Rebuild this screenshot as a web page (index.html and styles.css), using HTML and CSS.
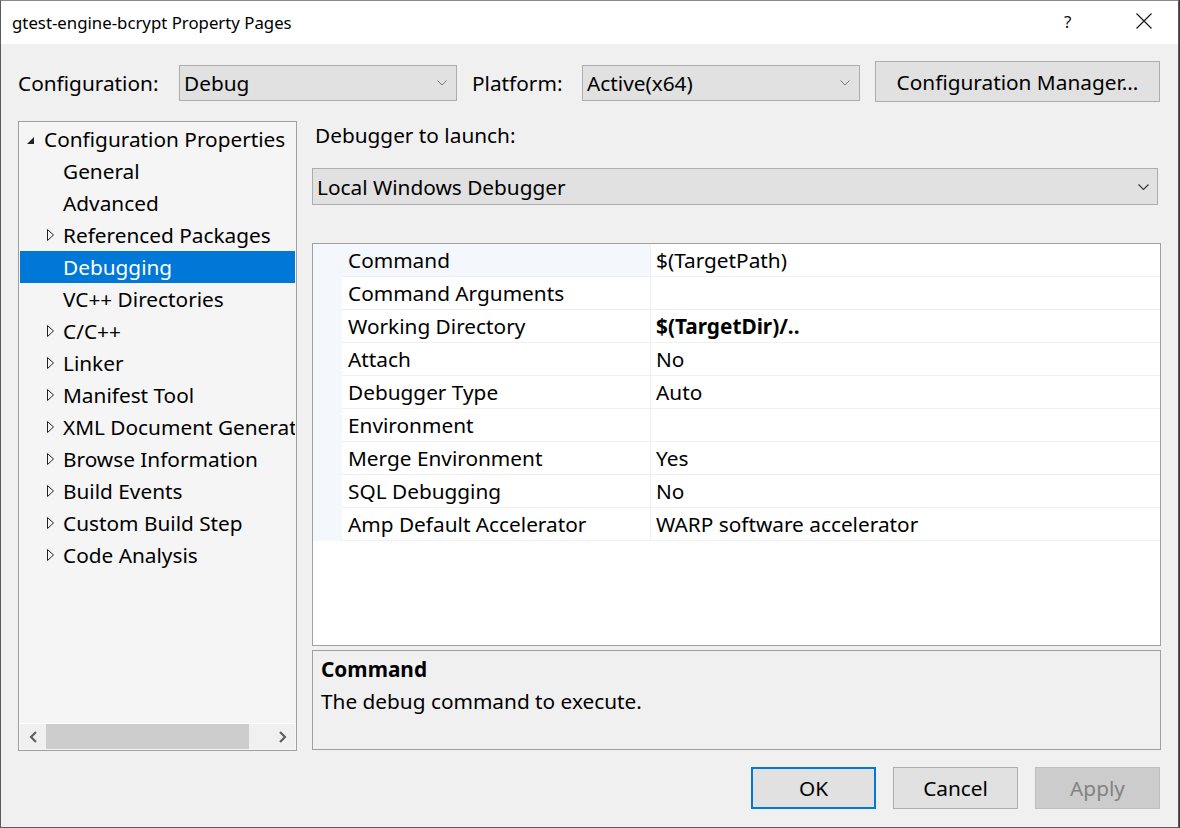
FILE: index.html
```html
<!DOCTYPE html>
<html>
<head>
<meta charset="utf-8">
<title>gtest-engine-bcrypt Property Pages</title>
<link rel="stylesheet" href="styles.css">
</head>
<body>
<div class="window">
  <div class="titlebar">
    <span class="title">gtest-engine-bcrypt Property Pages</span>
    <span class="tb-help">?</span>
    <span class="tb-close">
      <svg width="16" height="16" viewBox="0 0 16 16"><path d="M0.5 0.5 L15.5 15.5 M15.5 0.5 L0.5 15.5" stroke="#111" stroke-width="1.1" fill="none"/></svg>
    </span>
  </div>
  <div class="client">
    <div class="config-row">
      <span class="lbl lbl-config">Configuration:</span>
      <div class="combo combo-small"><span>Debug</span><svg class="chev" width="10" height="6" viewBox="0 0 10 6"><path d="M0.5 0.5 L5 5 L9.5 0.5" stroke="#777" stroke-width="1" fill="none"/></svg></div>
      <span class="lbl lbl-platform">Platform:</span>
      <div class="combo combo-small"><span>Active(x64)</span><svg class="chev" width="10" height="6" viewBox="0 0 10 6"><path d="M0.5 0.5 L5 5 L9.5 0.5" stroke="#777" stroke-width="1" fill="none"/></svg></div>
      <button class="btn btn-cfgmgr">Configuration Manager...</button>
    </div>
    <div class="main">
      <div class="tree">
        <div class="tree-items">
          <div class="node root"><span class="exp-open"></span><span>Configuration Properties</span></div>
          <div class="node child"><span class="exp-none"></span><span>General</span></div>
          <div class="node child"><span class="exp-none"></span><span>Advanced</span></div>
          <div class="node child"><span class="exp-closed"><svg width="8" height="12" viewBox="0 0 8 12"><path d="M0.5 0.5 L6.5 6 L0.5 11.5 Z" stroke="#222" stroke-width="1" fill="none"/></svg></span><span>Referenced Packages</span></div>
          <div class="node child selected"><span class="exp-none"></span><span>Debugging</span></div>
          <div class="node child"><span class="exp-none"></span><span>VC++ Directories</span></div>
          <div class="node child"><span class="exp-closed"><svg width="8" height="12" viewBox="0 0 8 12"><path d="M0.5 0.5 L6.5 6 L0.5 11.5 Z" stroke="#222" stroke-width="1" fill="none"/></svg></span><span>C/C++</span></div>
          <div class="node child"><span class="exp-closed"><svg width="8" height="12" viewBox="0 0 8 12"><path d="M0.5 0.5 L6.5 6 L0.5 11.5 Z" stroke="#222" stroke-width="1" fill="none"/></svg></span><span>Linker</span></div>
          <div class="node child"><span class="exp-closed"><svg width="8" height="12" viewBox="0 0 8 12"><path d="M0.5 0.5 L6.5 6 L0.5 11.5 Z" stroke="#222" stroke-width="1" fill="none"/></svg></span><span>Manifest Tool</span></div>
          <div class="node child"><span class="exp-closed"><svg width="8" height="12" viewBox="0 0 8 12"><path d="M0.5 0.5 L6.5 6 L0.5 11.5 Z" stroke="#222" stroke-width="1" fill="none"/></svg></span><span>XML Document Generator</span></div>
          <div class="node child"><span class="exp-closed"><svg width="8" height="12" viewBox="0 0 8 12"><path d="M0.5 0.5 L6.5 6 L0.5 11.5 Z" stroke="#222" stroke-width="1" fill="none"/></svg></span><span>Browse Information</span></div>
          <div class="node child"><span class="exp-closed"><svg width="8" height="12" viewBox="0 0 8 12"><path d="M0.5 0.5 L6.5 6 L0.5 11.5 Z" stroke="#222" stroke-width="1" fill="none"/></svg></span><span>Build Events</span></div>
          <div class="node child"><span class="exp-closed"><svg width="8" height="12" viewBox="0 0 8 12"><path d="M0.5 0.5 L6.5 6 L0.5 11.5 Z" stroke="#222" stroke-width="1" fill="none"/></svg></span><span>Custom Build Step</span></div>
          <div class="node child"><span class="exp-closed"><svg width="8" height="12" viewBox="0 0 8 12"><path d="M0.5 0.5 L6.5 6 L0.5 11.5 Z" stroke="#222" stroke-width="1" fill="none"/></svg></span><span>Code Analysis</span></div>
        </div>
        <div class="hscroll">
          <span class="sb-arrow"><svg width="9" height="12" viewBox="0 0 9 12"><path d="M7 1 L2 6 L7 11" stroke="#606060" stroke-width="2.2" fill="none"/></svg></span>
          <div class="sb-track"><div class="sb-thumb"></div></div>
          <span class="sb-arrow"><svg width="9" height="12" viewBox="0 0 9 12"><path d="M2 1 L7 6 L2 11" stroke="#606060" stroke-width="2.2" fill="none"/></svg></span>
        </div>
      </div>
      <div class="page">
        <div class="lbl launch-lbl">Debugger to launch:</div>
        <div class="combo combo-wide"><span>Local Windows Debugger</span><svg class="chev" width="11" height="6" viewBox="0 0 11 6"><path d="M0.5 0.5 L5.5 5.5 L10.5 0.5" stroke="#333" stroke-width="1.1" fill="none"/></svg></div>
        <div class="grid">
          <div class="prow first"><span class="gut"></span><span class="pname">Command</span><span class="pval">$(TargetPath)</span></div>
          <div class="prow"><span class="gut"></span><span class="pname">Command Arguments</span><span class="pval"></span></div>
          <div class="prow"><span class="gut"></span><span class="pname">Working Directory</span><span class="pval bold">$(TargetDir)/..</span></div>
          <div class="prow"><span class="gut"></span><span class="pname">Attach</span><span class="pval">No</span></div>
          <div class="prow"><span class="gut"></span><span class="pname">Debugger Type</span><span class="pval">Auto</span></div>
          <div class="prow"><span class="gut"></span><span class="pname">Environment</span><span class="pval"></span></div>
          <div class="prow"><span class="gut"></span><span class="pname">Merge Environment</span><span class="pval">Yes</span></div>
          <div class="prow"><span class="gut"></span><span class="pname">SQL Debugging</span><span class="pval">No</span></div>
          <div class="prow"><span class="gut"></span><span class="pname">Amp Default Accelerator</span><span class="pval">WARP software accelerator</span></div>
        </div>
        <div class="desc">
          <div class="desc-title">Command</div>
          <div class="desc-text">The debug command to execute.</div>
        </div>
      </div>
    </div>
    <div class="buttons">
      <button class="btn btn-ok">OK</button>
      <button class="btn">Cancel</button>
      <button class="btn btn-disabled">Apply</button>
    </div>
  </div>
</div>
</body>
</html>
```
FILE: styles.css
```css
* { box-sizing: border-box; }
html, body { margin: 0; padding: 0; }
body {
  width: 1180px;
  height: 828px;
  overflow: hidden;
  background: #3a3a3a;
  font-family: "Noto Sans", "Open Sans", sans-serif;
  color: #000;
}
.window {
  width: 1179px;
  height: 828px;
  border: 1px solid #5b5b5b;
  border-top-color: #8a8a8a;
  background: #f0f0f0;
  display: flex;
  flex-direction: column;
}
.titlebar {
  height: 43px;
  background: #fff;
  display: flex;
  align-items: center;
  padding-left: 11px;
  flex: none;
}
.title {
  font-size: 16.8px;
  flex: 1;
  padding-bottom: 1px;
}
.tb-help {
  font-size: 17px;
  width: 20px;
  margin-right: 52px;
  color: #111;
  padding-bottom: 2px;
}
.tb-close {
  width: 16px;
  height: 16px;
  margin-right: 26px;
  display: flex;
  margin-bottom: 3px;
}
.client {
  flex: 1;
  display: flex;
  flex-direction: column;
  padding: 0 17px 0 17px;
}
.lbl { font-size: 20.8px; flex: none; }
.config-row {
  display: flex;
  align-items: center;
  margin-top: 17px;
  height: 41px;
}
.lbl-config { width: 161px; padding-top: 3px; }
.lbl-platform { width: 110px; margin-left: 15px; padding-top: 3px; }
.combo {
  background: #e1e1e1;
  border: 1px solid #adadad;
  display: flex;
  align-items: center;
  font-size: 20.8px;
  padding-left: 4px;
  padding-right: 10px;
  flex: none;
}
.combo span { flex: 1; white-space: nowrap; }
.combo-small {
  width: 278px;
  height: 36px;
  margin-top: 3px;
  padding-right: 9px;
}
.btn {
  font-family: inherit;
  font-size: 20.8px;
  background: #e1e1e1;
  border: 1px solid #adadad;
  color: #000;
  padding: 0;
  width: 125px;
  height: 42px;
  flex: none;
}
.btn-cfgmgr {
  width: 285px;
  height: 41px;
  margin-left: 15px;
}
.main {
  display: flex;
  margin-top: 19px;
  height: 630px;
  gap: 15px;
}
.tree {
  width: 279px;
  height: 630px;
  flex: none;
  border: 1px solid #a0a0a0;
  background: #f5f5f5;
  padding: 1px;
  display: flex;
  flex-direction: column;
  overflow: hidden;
}
.tree-items { flex: 1; overflow: hidden; }
.node {
  height: 32px;
  display: flex;
  align-items: center;
  font-size: 20.8px;
  white-space: nowrap;
}
.node.selected { background: #0078d7; color: #fff; }
.exp-open {
  width: 0; height: 0;
  flex: none;
  border-style: solid;
  border-width: 0 0 7px 7px;
  border-color: transparent transparent #222 transparent;
  margin-left: 7px;
  margin-right: 10px;
  margin-top: 2px;
}
.exp-none, .exp-closed {
  width: 16px;
  flex: none;
  margin-left: 27px;
  display: flex;
  align-items: center;
}
.exp-closed svg { display: block; }
.hscroll {
  height: 26px;
  flex: none;
  display: flex;
  align-items: center;
  background: #f0f0f0;
  border-top: 1px solid #fff;
}
.sb-arrow {
  width: 26px;
  height: 25px;
  display: flex;
  align-items: center;
  justify-content: center;
}
.sb-track { flex: 1; height: 25px; }
.sb-thumb { width: 203px; height: 25px; background: #cdcdcd; }
.page {
  width: 849px;
  flex: none;
  display: flex;
  flex-direction: column;
}
.launch-lbl {
  height: 29px;
  line-height: 29px;
  margin-left: 3px;
}
.combo-wide {
  width: 846px;
  height: 37px;
  margin-top: 18px;
  padding-right: 8px;
}
.grid {
  margin-top: 38px;
  height: 403px;
  border: 1px solid #a0a0a0;
  background: #fff;
  display: flex;
  flex-direction: column;
}
.prow {
  display: flex;
  height: 33px;
  font-size: 20.8px;
}
.gut { width: 29px; background: #f4f7fc; flex: none; }
.pname {
  width: 308px;
  padding-left: 6px;
  border-bottom: 1px solid #f0f0f0;
  display: flex;
  align-items: center;
  flex: none;
  white-space: nowrap;
}
.prow.first .pname { background: #f4f7fc; }
.pval {
  flex: 1;
  padding-left: 5px;
  border-left: 1px solid #f0f0f0;
  border-bottom: 1px solid #f0f0f0;
  display: flex;
  align-items: center;
  white-space: nowrap;
}
.pval.bold { font-weight: bold; }
.desc {
  margin-top: 4px;
  height: 100px;
  border: 1px solid #a0a0a0;
  background: #f0f0f0;
  padding: 4px 8px;
}
.desc-title { font-weight: bold; font-size: 20.8px; height: 29px; line-height: 29px; }
.desc-text { font-size: 20.8px; height: 34px; line-height: 34px; }
.buttons {
  display: flex;
  justify-content: flex-end;
  gap: 17px;
  margin-top: 16px;
  padding-right: 1px;
}
.btn-ok { border: 2px solid #0078d7; }
.btn-disabled { background: #cccccc; border-color: #bfbfbf; color: #838383; }
```
